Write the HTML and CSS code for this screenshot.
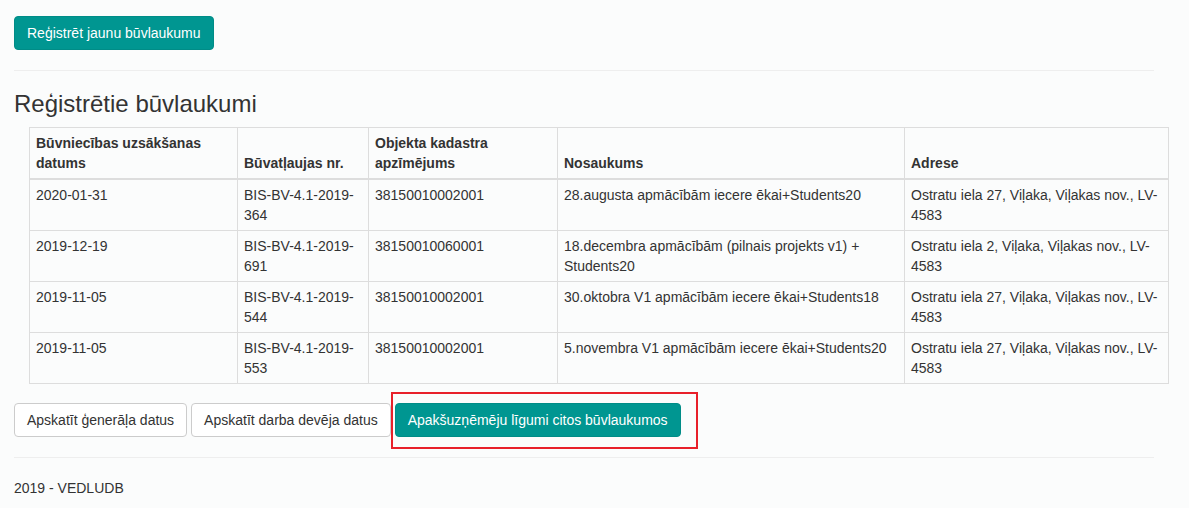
FILE: index.html
```html
<!DOCTYPE html>
<html lang="lv">
<head>
<meta charset="utf-8">
<title>Reģistrētie būvlaukumi</title>
<link rel="stylesheet" href="styles.css">
</head>
<body>
<div class="container">
  <div class="top-actions">
    <button class="btn btn-teal">Reģistrēt jaunu būvlaukumu</button>
  </div>
  <hr class="divider">
  <h3 class="title">Reģistrētie būvlaukumi</h3>
  <div class="table-wrap">
    <table class="grid">
      <colgroup>
        <col class="c1"><col class="c2"><col class="c3"><col class="c4"><col class="c5">
      </colgroup>
      <thead>
        <tr>
          <th>Būvniecības uzsākšanas datums</th>
          <th>Būvatļaujas nr.</th>
          <th>Objekta kadastra apzīmējums</th>
          <th>Nosaukums</th>
          <th>Adrese</th>
        </tr>
      </thead>
      <tbody>
        <tr>
          <td>2020-01-31</td>
          <td>BIS-BV-4.1-2019-364</td>
          <td>38150010002001</td>
          <td>28.augusta apmācībām iecere ēkai+Students20</td>
          <td>Ostratu iela 27, Viļaka, Viļakas nov., LV-4583</td>
        </tr>
        <tr>
          <td>2019-12-19</td>
          <td>BIS-BV-4.1-2019-691</td>
          <td>38150010060001</td>
          <td>18.decembra apmācībām (pilnais projekts v1) + Students20</td>
          <td>Ostratu iela 2, Viļaka, Viļakas nov., LV-4583</td>
        </tr>
        <tr>
          <td>2019-11-05</td>
          <td>BIS-BV-4.1-2019-544</td>
          <td>38150010002001</td>
          <td>30.oktobra V1 apmācībām iecere ēkai+Students18</td>
          <td>Ostratu iela 27, Viļaka, Viļakas nov., LV-4583</td>
        </tr>
        <tr>
          <td>2019-11-05</td>
          <td>BIS-BV-4.1-2019-553</td>
          <td>38150010002001</td>
          <td>5.novembra V1 apmācībām iecere ēkai+Students20</td>
          <td>Ostratu iela 27, Viļaka, Viļakas nov., LV-4583</td>
        </tr>
      </tbody>
    </table>
  </div>
  <div class="bottom-actions">
    <button class="btn btn-default">Apskatīt ģenerāļa datus</button>
    <button class="btn btn-default">Apskatīt darba devēja datus</button>
    <div class="highlight-wrap">
      <button class="btn btn-teal">Apakšuzņēmēju līgumi citos būvlaukumos</button>
      <span class="highlight"></span>
    </div>
  </div>
  <hr class="divider">
  <footer class="footer">2019 - VEDLUDB</footer>
</div>
</body>
</html>
```
FILE: styles.css
```css
html, body {
  margin: 0;
  padding: 0;
}
body {
  background: #fbfcfc;
  font-family: "Liberation Sans", Arial, sans-serif;
  font-size: 14px;
  line-height: 20px;
  color: #333;
}
.container {
  width: 1140px;
  padding: 16px 0 0 14px;
}
.top-actions {
  display: flex;
}
.btn {
  font-family: "Liberation Sans", Arial, sans-serif;
  font-size: 14px;
  line-height: 20px;
  padding: 6px 12px;
  border-radius: 4px;
  border: 1px solid transparent;
  cursor: pointer;
  white-space: nowrap;
}
.btn-teal {
  background: #009691;
  border-color: #008c87;
  color: #fff;
}
.btn-default {
  background: #fff;
  border-color: #ccc;
  color: #333;
}
.divider {
  margin: 20px 0;
  border: 0;
  border-top: 1px solid #eee;
  height: 0;
}
.title {
  margin: 0 0 10px 0;
  font-size: 24px;
  font-weight: 500;
  line-height: 26px;
  color: #333;
}
.table-wrap {
  padding-left: 15px;
}
.grid {
  width: 1139px;
  table-layout: fixed;
  border-collapse: collapse;
}
.c1 { width: 208px; }
.c2 { width: 131px; }
.c3 { width: 189px; }
.c4 { width: 347px; }
.c5 { width: 264px; }
.grid th,
.grid td {
  border: 1px solid #ddd;
  padding: 5px 5px 5px 6px;
  text-align: left;
  vertical-align: top;
}
.grid th {
  vertical-align: bottom;
  font-weight: bold;
  border-bottom: 2px solid #ddd;
}
.bottom-actions {
  display: flex;
  align-items: center;
  gap: 4px;
  margin-top: 19px;
}
.highlight-wrap {
  position: relative;
  display: flex;
}
.highlight {
  position: absolute;
  left: -4px;
  top: -11px;
  width: 303px;
  height: 53px;
  border: 2px solid #e8202a;
  pointer-events: none;
}
.footer {
  padding-top: 0;
}
```
